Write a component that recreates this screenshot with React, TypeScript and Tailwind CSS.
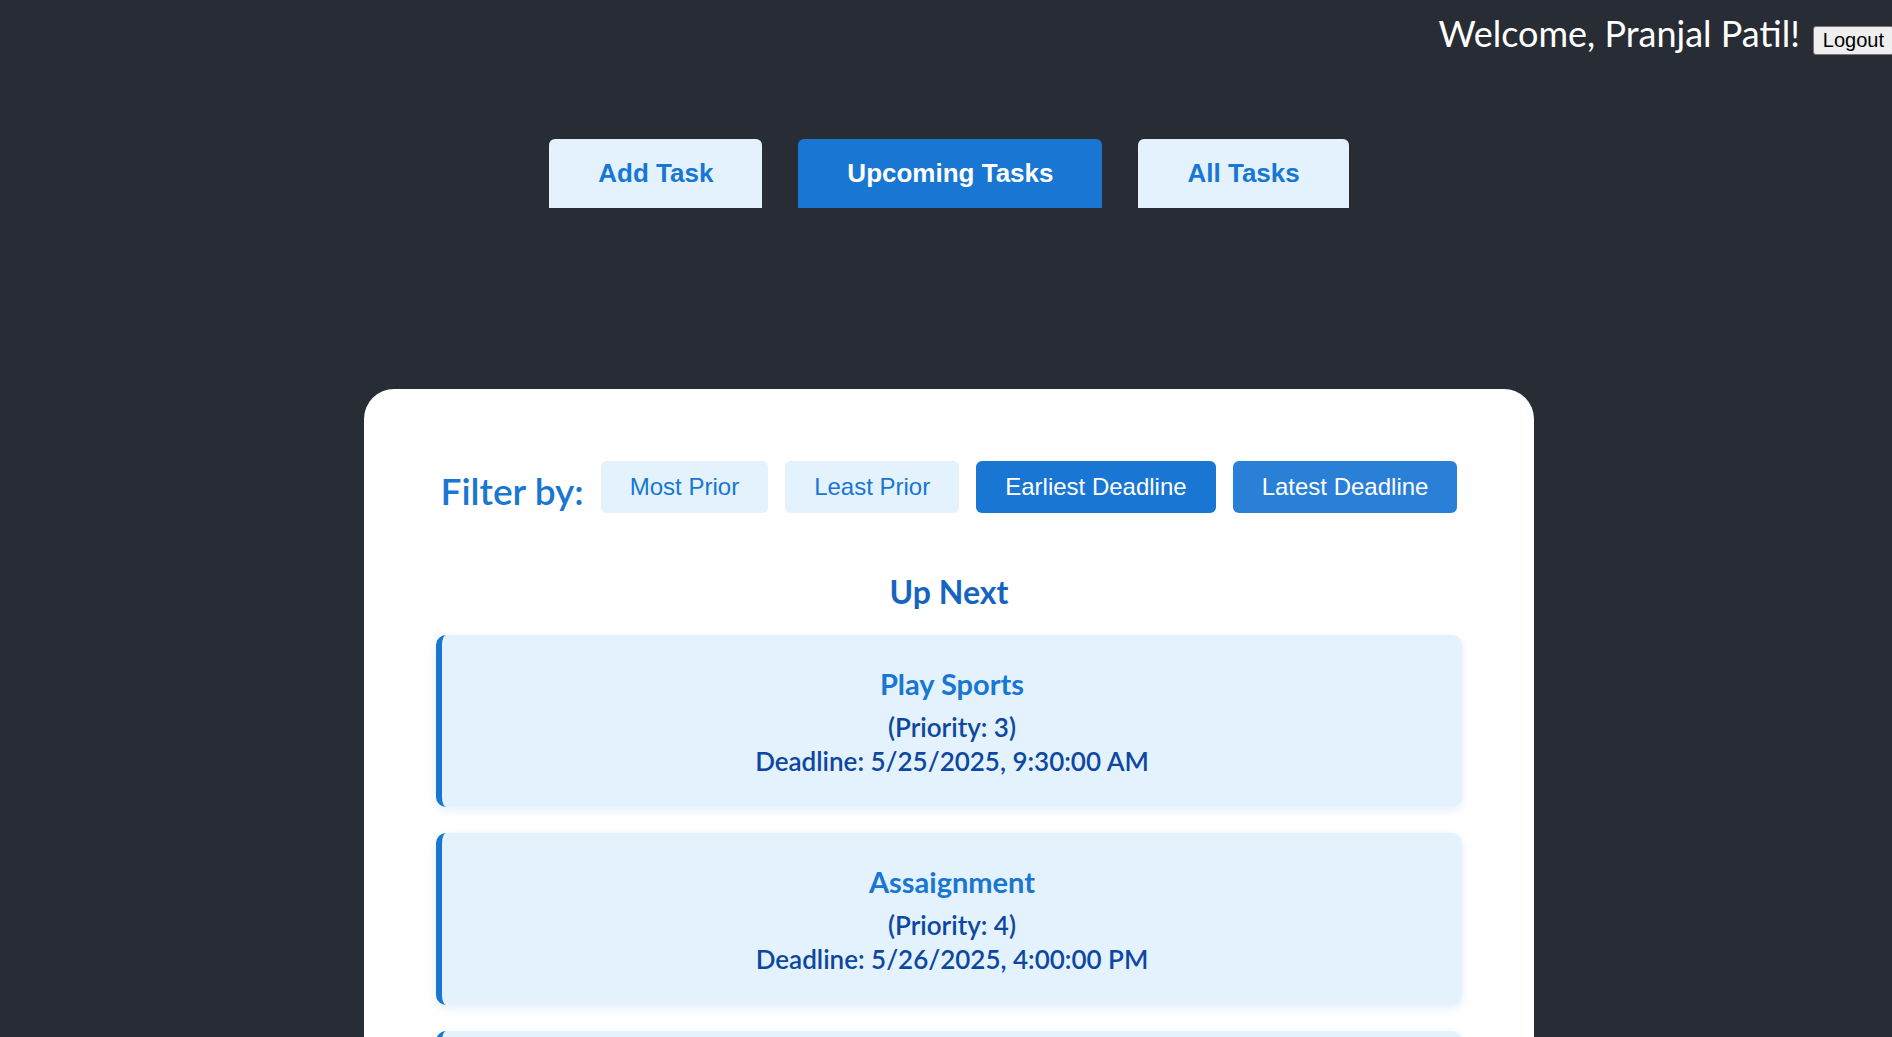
import { useState } from "react";

const TABS = ["Add Task", "Upcoming Tasks", "All Tasks"];

const FILTERS = [
  { label: "Most Prior", cls: "bg-[#e3f2fd] text-[#1976d2]" },
  { label: "Least Prior", cls: "bg-[#e3f2fd] text-[#1976d2]" },
  { label: "Earliest Deadline", cls: "bg-[#1976d2] text-white" },
  { label: "Latest Deadline", cls: "bg-[#2a7fd6] text-white" },
];

const TASKS = [
  { title: "Play Sports", priority: 3, deadline: "5/25/2025, 9:30:00 AM" },
  { title: "Assaignment", priority: 4, deadline: "5/26/2025, 4:00:00 PM" },
  { title: "Read Book", priority: 2, deadline: "5/27/2025, 8:00:00 PM" },
];

const ui = "font-['Segoe_UI',Lato,sans-serif]";
const arial = "font-['Liberation_Sans',Arial,sans-serif]";

export default function App() {
  const [tab, setTab] = useState("Upcoming Tasks");

  return (
    <div className="min-h-screen overflow-hidden bg-[#282c34] pb-20">
      {/* header */}
      <div className="flex items-baseline justify-end pt-[9px]">
        <h2 className={`${ui} text-[36px] leading-[48px] font-normal text-white`}>Welcome, Pranjal Patil!</h2>
        <button
          className={`${arial} ml-[13px] -mr-[2px] rounded-[3px] border border-[#767676] bg-[#efefef] px-[9px] py-[2px] text-[20px] leading-[23px] text-black`}
        >
          Logout
        </button>
      </div>

      <div className="pl-[6px]">
        {/* tabs */}
        <div className="mt-[82px] flex justify-center gap-9">
          {TABS.map((t) => (
            <button
              key={t}
              onClick={() => setTab(t)}
              className={`${arial} rounded-t-[6px] px-[49px] py-[20px] text-[26px] leading-[29px] font-bold ${
                tab === t ? "bg-[#1976d2] text-white" : "bg-[#e3f2fd] text-[#1976d2]"
              }`}
            >
              {t}
            </button>
          ))}
        </div>

        {/* panel */}
        <div className="mx-auto mt-[181px] w-[1170px] rounded-[30px] bg-white p-[72px]">
          <div className="flex items-center justify-center gap-[17px]">
            <span className={`${ui} pt-[7px] text-[37px] leading-[44px] font-semibold text-[#1976d2]`}>Filter by:</span>
            {FILTERS.map((f) => (
              <button
                key={f.label}
                className={`${arial} rounded-[6px] px-[29px] py-[12px] text-[24px] leading-[28px] ${f.cls}`}
              >
                {f.label}
              </button>
            ))}
          </div>

          <h3 className={`${ui} mt-[61px] mb-[25px] text-center text-[32px] leading-[36px] font-bold text-[#1565c0]`}>
            Up Next
          </h3>

          <div className="flex flex-col gap-[26px]">
            {TASKS.map((t) => (
              <div
                key={t.title}
                className={`${ui} rounded-[10px] border-l-[6px] border-[#1976d2] bg-[#e3f2fd] pt-[32px] pb-[29px] text-center shadow-[0_3px_10px_rgba(25,118,210,0.12)]`}
              >
                <h4 className="text-[29px] leading-[34px] font-bold text-[#1976d2]">{t.title}</h4>
                <p className="mt-[9px] text-[26px] leading-[34px] font-semibold text-[#0d47a1]">
                  (Priority: {t.priority})
                  <br />
                  Deadline: {t.deadline}
                </p>
              </div>
            ))}
          </div>
        </div>
      </div>
    </div>
  );
}
